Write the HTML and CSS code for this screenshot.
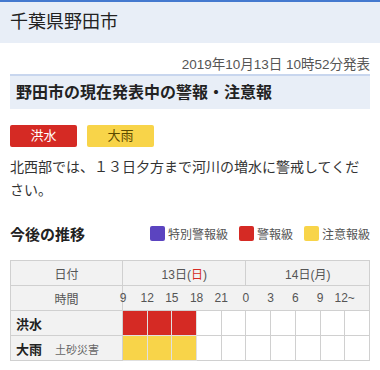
FILE: index.html
```html
<!DOCTYPE html>
<html lang="ja">
<head>
    <meta charset="UTF-8">
    <meta name="viewport" content="width=device-width, initial-scale=1.0">
    <title>千葉県野田市</title>
    <link rel="stylesheet" href="styles.css">
</head>
<body>
    <header class="page-head">
        <h1>千葉県野田市</h1>
    </header>
    <p class="issued">2019年10月13日 10時52分発表</p>
    <h2 class="section-title">野田市の現在発表中の警報・注意報</h2>

    <div class="badges">
        <span class="badge badge-red">洪水</span>
        <span class="badge badge-yellow">大雨</span>
    </div>
    <p class="message">北西部では、１３日夕方まで河川の増水に警戒してください。</p>

    <div class="trend-head">
        <h3>今後の推移</h3>
        <ul class="legend">
            <li><span class="swatch purple"></span>特別警報級</li>
            <li><span class="swatch red"></span>警報級</li>
            <li><span class="swatch yellow"></span>注意報級</li>
        </ul>
    </div>

    <table class="trend">
        <colgroup>
            <col class="label-col">
            <col span="10">
        </colgroup>
        <tr class="date-row">
            <th>日付</th>
            <th colspan="5">13日(<span class="sun">日</span>)</th>
            <th colspan="5">14日(月)</th>
        </tr>
        <tr class="hour-row">
            <th>時間</th>
            <td class="hour"><span>9</span></td>
            <td class="hour"><span>12</span></td>
            <td class="hour"><span>15</span></td>
            <td class="hour"><span>18</span></td>
            <td class="hour"><span>21</span></td>
            <td class="hour"><span>0</span></td>
            <td class="hour"><span>3</span></td>
            <td class="hour"><span>6</span></td>
            <td class="hour"><span>9</span></td>
            <td class="hour"><span>12~</span></td>
        </tr>
        <tr>
            <th class="kind">洪水</th>
            <td class="lv-red"></td><td class="lv-red"></td><td class="lv-red"></td>
            <td></td><td></td><td></td><td></td><td></td><td></td><td></td>
        </tr>
        <tr>
            <th class="kind">大雨<small>土砂災害</small></th>
            <td class="lv-yellow"></td><td class="lv-yellow"></td><td class="lv-yellow"></td>
            <td></td><td></td><td></td><td></td><td></td><td></td><td></td>
        </tr>
    </table>
</body>
</html>
```

FILE: styles.css
```css
body {
    margin: 0;
    font-family: "Liberation Sans", "Noto Sans CJK JP", sans-serif;
    color: #333;
    background: #fff;
}
.page-head {
    border-top: 2px solid #4479cf;
    background: #e8eef7;
    height: 41px;
    padding: 0 10px;
}
.page-head h1 {
    margin: 0;
    font-size: 18px;
    font-weight: normal;
    line-height: 41px;
    color: #222;
}
.issued {
    margin: 13px 10px 0;
    font-size: 13.5px;
    line-height: 18px;
    text-align: right;
    color: #555;
}
.section-title {
    margin: 0 10px;
    border-top: 2px solid #c8d6ee;
    background: #e8eef7;
    height: 33px;
    line-height: 33px;
    padding-left: 6px;
    font-size: 16px;
    font-weight: bold;
    color: #222;
}
.badges {
    display: flex;
    gap: 10px;
    margin: 16px 10px 0;
}
.badge {
    width: 67px;
    height: 22px;
    line-height: 22px;
    border-radius: 2px;
    text-align: center;
    font-size: 13px;
}
.badge-red {
    background: #d52a24;
    color: #fff;
}
.badge-yellow {
    background: #f8d449;
    color: #5c4a00;
}
.message {
    margin: 9px 10px 0;
    font-size: 14px;
    line-height: 23px;
    color: #333;
}
.trend-head {
    display: flex;
    justify-content: space-between;
    align-items: center;
    height: 24px;
    margin: 19px 10px 0;
}
.trend-head h3 {
    margin: 0;
    font-size: 15px;
    font-weight: bold;
    color: #222;
}
.legend {
    display: flex;
    gap: 11px;
    margin: 0;
    padding: 0;
    list-style: none;
    font-size: 12px;
    color: #555;
}
.legend li {
    display: flex;
    align-items: center;
    gap: 3px;
}
.swatch {
    width: 15px;
    height: 15px;
    border-radius: 2px;
}
.swatch.purple { background: #5b44c0; }
.swatch.red { background: #d52a24; }
.swatch.yellow { background: #f8d449; }

.trend {
    width: 360px;
    margin: 15px 10px 0;
    border-collapse: collapse;
    table-layout: fixed;
    font-size: 12px;
    color: #555;
}
.trend .label-col {
    width: 112px;
}
.trend th,
.trend td {
    border: 1px solid #d0d0d0;
    height: 24px;
    padding: 0;
}
.trend th {
    background: #f2f2f2;
    font-weight: normal;
    text-align: center;
}
.sun {
    color: #d52a24;
}
.hour-row td {
    background: #f2f2f2;
    text-align: left;
    white-space: nowrap;
}
.hour-row .hour + .hour {
    border-left-style: hidden;
}
.hour span {
    display: inline-block;
    transform: translateX(-50%);
}
.trend th.kind {
    text-align: left;
    padding-left: 5px;
    font-size: 13px;
    font-weight: bold;
    color: #222;
}
.kind small {
    margin-left: 13px;
    font-size: 11px;
    font-weight: normal;
    color: #666;
}
.trend td.lv-red {
    background: #d52a24;
    border-color: #e0e0e0;
}
.trend td.lv-yellow {
    background: #f8d449;
    border-color: #e0e0e0;
}
```
